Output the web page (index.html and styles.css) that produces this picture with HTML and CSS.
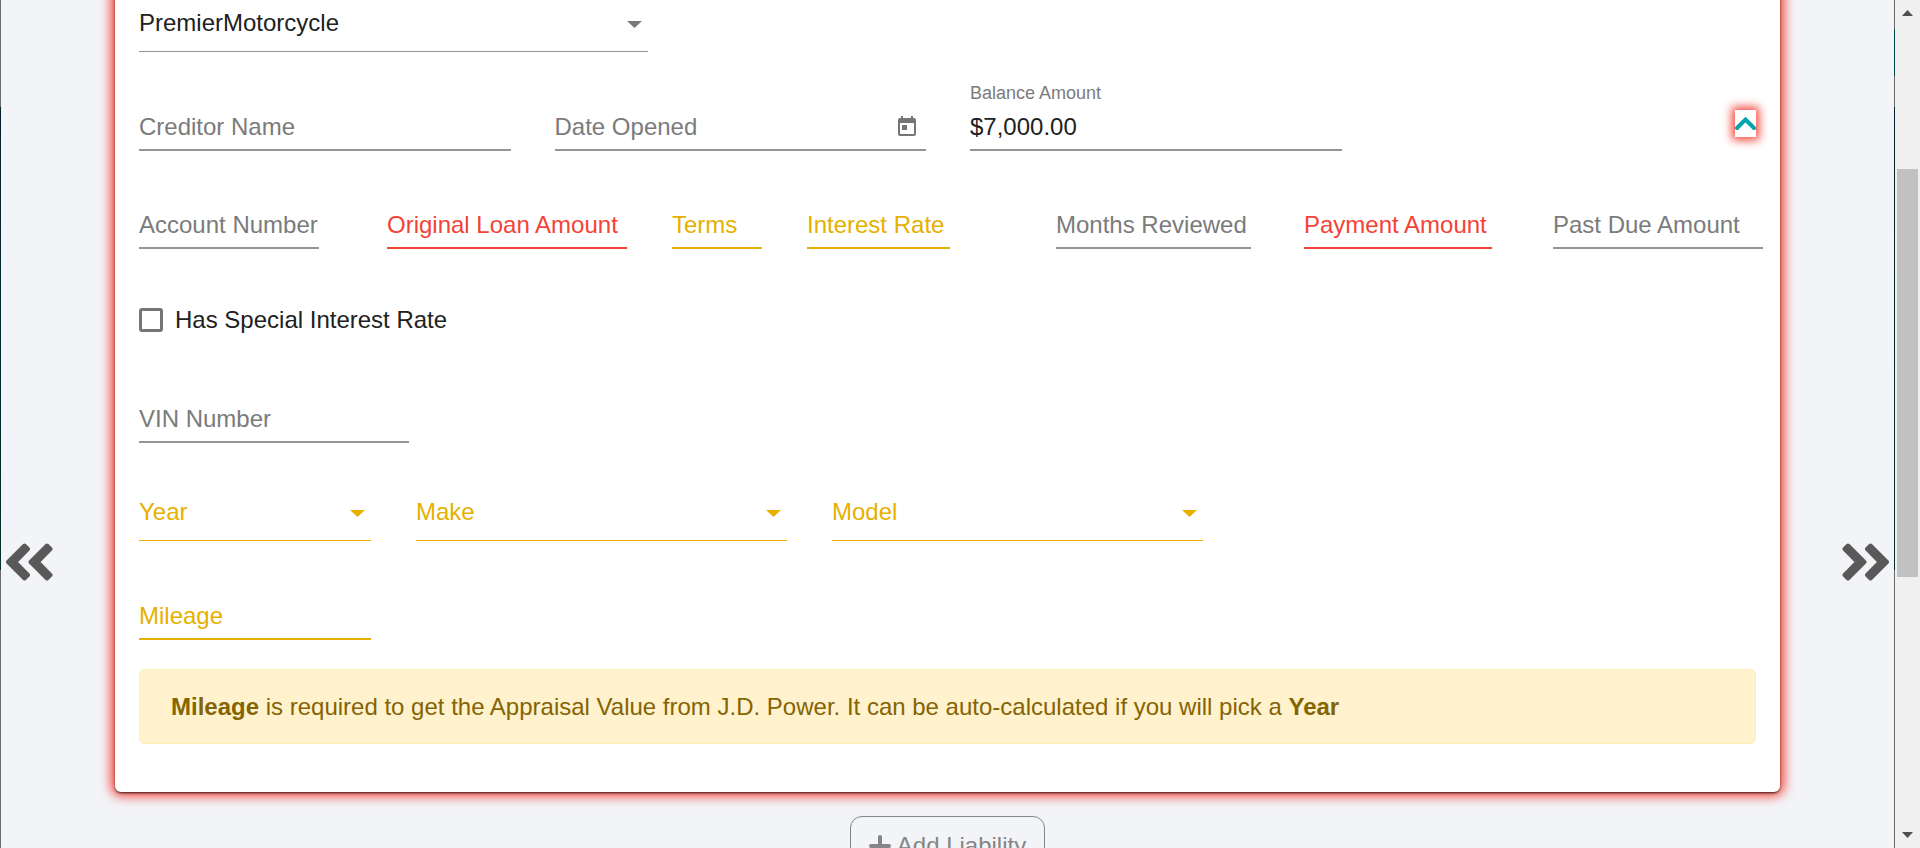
FILE: index.html
```html
<!DOCTYPE html>
<html lang="en">
<head>
<meta charset="utf-8">
<title>Liabilities</title>
<link rel="stylesheet" href="styles.css">
</head>
<body>
<svg class="defs" aria-hidden="true">
  <symbol id="caret" viewBox="0 0 15 7"><path d="M0 0h15L7.500 7z"/></symbol>
  <symbol id="double-left" viewBox="0 0 47 38"><path d="M2 19 18.500 2.500 22 6 9.200 19 22 32l-3.500 3.500zM24.500 19 41 2.500 44.500 6 31.700 19l12.800 13-3.500 3.500z"/></symbol>
  <symbol id="double-right" viewBox="0 0 47 38"><path d="M45 19 28.500 2.500 25 6l12.800 13L25 32l3.500 3.500zM22.500 19 6 2.500 2.500 6l12.800 13L2.500 32 6 35.500z"/></symbol>
</svg>
<div class="shell">
  <div class="edge edge-left"></div>
  <nav class="side side-prev">
    <button class="step" type="button" aria-label="Previous">
      <svg width="47" height="38"><use href="#double-left"/></svg>
    </button>
  </nav>
  <main class="content">
    <form class="card">
      <div class="row row-type">
        <div class="field field-select">
          <select class="control" aria-label="Liability Type"><option>PremierMotorcycle</option></select>
          <svg class="caret"><use href="#caret"/></svg>
        </div>
      </div>

      <div class="row row-creditor">
        <div class="field">
          <label class="label" for="creditor">Creditor Name</label>
          <input class="control" id="creditor" type="text">
        </div>
        <div class="field">
          <label class="label" for="opened">Date Opened</label>
          <input class="control" id="opened" type="text">
          <button class="calendar" type="button" aria-label="Open calendar">
            <svg width="24" height="24" viewBox="0 0 24 24"><path d="M19 3h-1V1h-2v2H8V1H6v2H5c-1.110 0-1.990.9-1.990 2L3 19c0 1.100.89 2 2 2h14c1.100 0 2-.9 2-2V5c0-1.100-.9-2-2-2zm0 16H5V8h14v11zM7 10h5v5H7z"/></svg>
          </button>
        </div>
        <div class="field field-filled">
          <label class="label-float" for="balance">Balance Amount</label>
          <input class="control" id="balance" type="text" value="$7,000.00">
        </div>
        <button class="toggle" type="button" aria-label="Collapse">
          <svg width="21" height="27" viewBox="0 0 21 27"><path d="M2 18l8.500-8.500L19 18"/></svg>
        </button>
      </div>

      <div class="row row-loan">
        <div class="field">
          <label class="label" for="account">Account Number</label>
          <input class="control" id="account" type="text">
        </div>
        <div class="field is-error">
          <label class="label" for="loan">Original Loan Amount</label>
          <input class="control" id="loan" type="text">
        </div>
        <div class="field is-warning">
          <label class="label" for="terms">Terms</label>
          <input class="control" id="terms" type="text">
        </div>
        <div class="field is-warning">
          <label class="label" for="rate">Interest Rate</label>
          <input class="control" id="rate" type="text">
        </div>
        <div class="field">
          <label class="label" for="months">Months Reviewed</label>
          <input class="control" id="months" type="text">
        </div>
        <div class="field is-error">
          <label class="label" for="payment">Payment Amount</label>
          <input class="control" id="payment" type="text">
        </div>
        <div class="field">
          <label class="label" for="pastdue">Past Due Amount</label>
          <input class="control" id="pastdue" type="text">
        </div>
      </div>

      <div class="check">
        <input class="box" id="special" type="checkbox">
        <label for="special">Has Special Interest Rate</label>
      </div>

      <div class="row row-vin">
        <div class="field">
          <label class="label" for="vin">VIN Number</label>
          <input class="control" id="vin" type="text">
        </div>
      </div>

      <div class="row row-vehicle">
        <div class="field field-select is-warning">
          <label class="label" for="year">Year</label>
          <select class="control" id="year"><option></option></select>
          <svg class="caret"><use href="#caret"/></svg>
        </div>
        <div class="field field-select is-warning">
          <label class="label" for="make">Make</label>
          <select class="control" id="make"><option></option></select>
          <svg class="caret"><use href="#caret"/></svg>
        </div>
        <div class="field field-select is-warning">
          <label class="label" for="model">Model</label>
          <select class="control" id="model"><option></option></select>
          <svg class="caret"><use href="#caret"/></svg>
        </div>
      </div>

      <div class="row row-vehicle row-mileage">
        <div class="field is-warning">
          <label class="label" for="mileage">Mileage</label>
          <input class="control" id="mileage" type="text">
        </div>
      </div>

      <p class="alert"><strong>Mileage</strong> is required to get the Appraisal Value from J.D. Power. It can be auto-calculated if you will pick a <strong>Year</strong></p>
    </form>
    <button class="add" type="button">
      <svg width="22" height="22" viewBox="0 0 22 22"><path d="M11 2v18M2 11h18"/></svg>
      Add Liability
    </button>
  </main>
  <nav class="side side-next">
    <button class="step" type="button" aria-label="Next">
      <svg width="47" height="38"><use href="#double-right"/></svg>
    </button>
  </nav>
  <div class="edge edge-right"></div>
  <div class="scrollbar" aria-hidden="true">
    <svg width="11" height="6" viewBox="0 0 11 6"><path d="M0 6h11L5.500 0z"/></svg>
    <div class="track"><div class="thumb"></div></div>
    <svg width="11" height="6" viewBox="0 0 11 6"><path d="M0 0h11L5.500 6z"/></svg>
  </div>
</div>
</body>
</html>
```

FILE: styles.css
```css
* {
  box-sizing: border-box;
}

body {
  margin: 0;
  height: 100vh;
  overflow: hidden;
  background: #f3f4f8;
  color: #212121;
  font: 24px/28px "Liberation Sans", Arial, sans-serif;
}

button,
input,
select {
  margin: 0;
  padding: 0;
  border: 0;
  border-radius: 0;
  background: none;
  color: inherit;
  font: inherit;
}

svg {
  display: block;
}

.defs {
  position: absolute;
  width: 0;
  height: 0;
}

.shell {
  display: grid;
  grid-template-columns: 1px 114px minmax(0, 1fr) 114px 1px 25px;
  grid-template-rows: 100vh;
  overflow: hidden;
}

.edge-left {
  background: linear-gradient(#6b6b6b 107px, #04222b 107px, #04302e 570px, #6b6b6b 570px);
}

.edge-right {
  background: linear-gradient(#6b6b6b 29px, #00454a 29px, #00454a 76px, #6b6b6b 76px, #6b6b6b 107px, #04222b 107px, #04302e 570px, #6b6b6b 570px);
}

.side {
  display: flex;
  align-items: flex-start;
  padding: 64vh 5px 0;
}

.side-next {
  justify-content: flex-end;
}

.step {
  fill: #595959;
  stroke: #595959;
  stroke-width: 4;
  stroke-linejoin: round;
}

.content {
  display: flex;
  flex-direction: column;
}

/* The card continues above the visible part of the scrolled page. */
.card {
  margin-top: -24px;
  padding: 33px 17px 48px 24px;
  border-radius: 6px;
  background: #fff;
  box-shadow: 0 2px 2px -1px rgba(0, 0, 0, 0.5), 0 1px 3px rgba(0, 0, 0, 0.4), 0 0 12px 4px #f44336;
}

.row {
  display: grid;
  align-items: end;
}

.row-type {
  grid-template-columns: 509fr 1115fr;
}

.row-creditor {
  grid-template-columns: repeat(3, 743fr) 755fr;
  column-gap: 44px;
  padding-top: 1px;
}

.row-loan {
  grid-template-columns: 248fr 285fr 135fr 249fr 248fr 249fr 210fr;
}

.row-loan .field:nth-child(1) { margin-right: 68px; }
.row-loan .field:nth-child(2) { margin-right: 45px; }
.row-loan .field:nth-child(3) { margin-right: 45px; }
.row-loan .field:nth-child(4) { margin-right: 106px; }
.row-loan .field:nth-child(5) { margin-right: 53px; }
.row-loan .field:nth-child(6) { margin-right: 61px; }

.row-vin {
  grid-template-columns: 270fr 1354fr;
}

.row-vehicle {
  grid-template-columns: 232fr 371fr 371fr 515fr;
  column-gap: 45px;
}

.row-mileage {
  padding-top: 1px;
}

.field {
  --line: #949494;
  --text: #7b7b7b;
  display: grid;
  grid-template-columns: minmax(0, 1fr);
  align-items: start;
  padding-top: 60px;
  border-bottom: 2px solid var(--line);
}

.field > * {
  grid-area: 1 / 1;
}

.is-error {
  --line: #f44336;
  --text: #f44336;
}

.is-warning {
  --line: #e6b000;
  --text: #e6b000;
}

.label {
  color: var(--text);
  white-space: nowrap;
  pointer-events: none;
}

.control {
  width: 100%;
  height: 36px;
  padding-bottom: 8px;
  outline: 0;
  appearance: none;
}

.field-select {
  padding-top: 55px;
  border-bottom-width: 1px;
}

.field-select .control {
  height: 42px;
  padding-bottom: 14px;
}

.row-type .field {
  padding-top: 0;
}

.caret {
  justify-self: end;
  width: 15px;
  height: 7px;
  margin: 12px 6px 0;
  fill: var(--text);
  pointer-events: none;
}

.calendar {
  justify-self: end;
  margin: 2px 7px 0;
  fill: #757575;
}

.field-filled {
  padding-top: 30px;
  row-gap: 10px;
}

.field-filled .label-float {
  grid-area: 1 / 1;
  color: #7b7b7b;
  font-size: 18px;
  line-height: 20px;
}

.field-filled .control {
  grid-area: 2 / 1;
}

.toggle {
  justify-self: end;
  margin: 0 7px 14px;
  background: #fff;
  box-shadow: 0 0 10px 3px #f44336;
}

.toggle path {
  fill: none;
  stroke: #00a5af;
  stroke-width: 4;
  stroke-linecap: round;
}

.check {
  display: flex;
  align-items: center;
  gap: 12px;
  height: 96px;
  padding-top: 46px;
}

.box {
  width: 24px;
  height: 24px;
  border: 3px solid #757575;
  border-radius: 3px;
  appearance: none;
}

.alert {
  margin: 29px 7px 0 0;
  padding: 23px 31px 22px;
  border: 1px solid #ffebb5;
  border-radius: 6px;
  background: #fff2cd;
  color: #856404;
}

.add {
  display: flex;
  align-self: center;
  align-items: center;
  gap: 6px;
  margin-top: 24px;
  padding: 15px 18px;
  border: 1px solid #858585;
  border-radius: 12px;
  color: #858585;
}

.add path {
  stroke: #858585;
  stroke-width: 4;
  stroke-linecap: round;
}

.scrollbar {
  display: flex;
  flex-direction: column;
  align-items: center;
  padding: 10px 2px;
  background: #f0f0f0;
  fill: #505050;
}

.track {
  display: grid;
  flex: 1;
  grid-template-rows: 153fr 408fr 255fr;
  align-self: stretch;
}

.thumb {
  grid-row: 2;
  background: #c1c1c1;
}
```
